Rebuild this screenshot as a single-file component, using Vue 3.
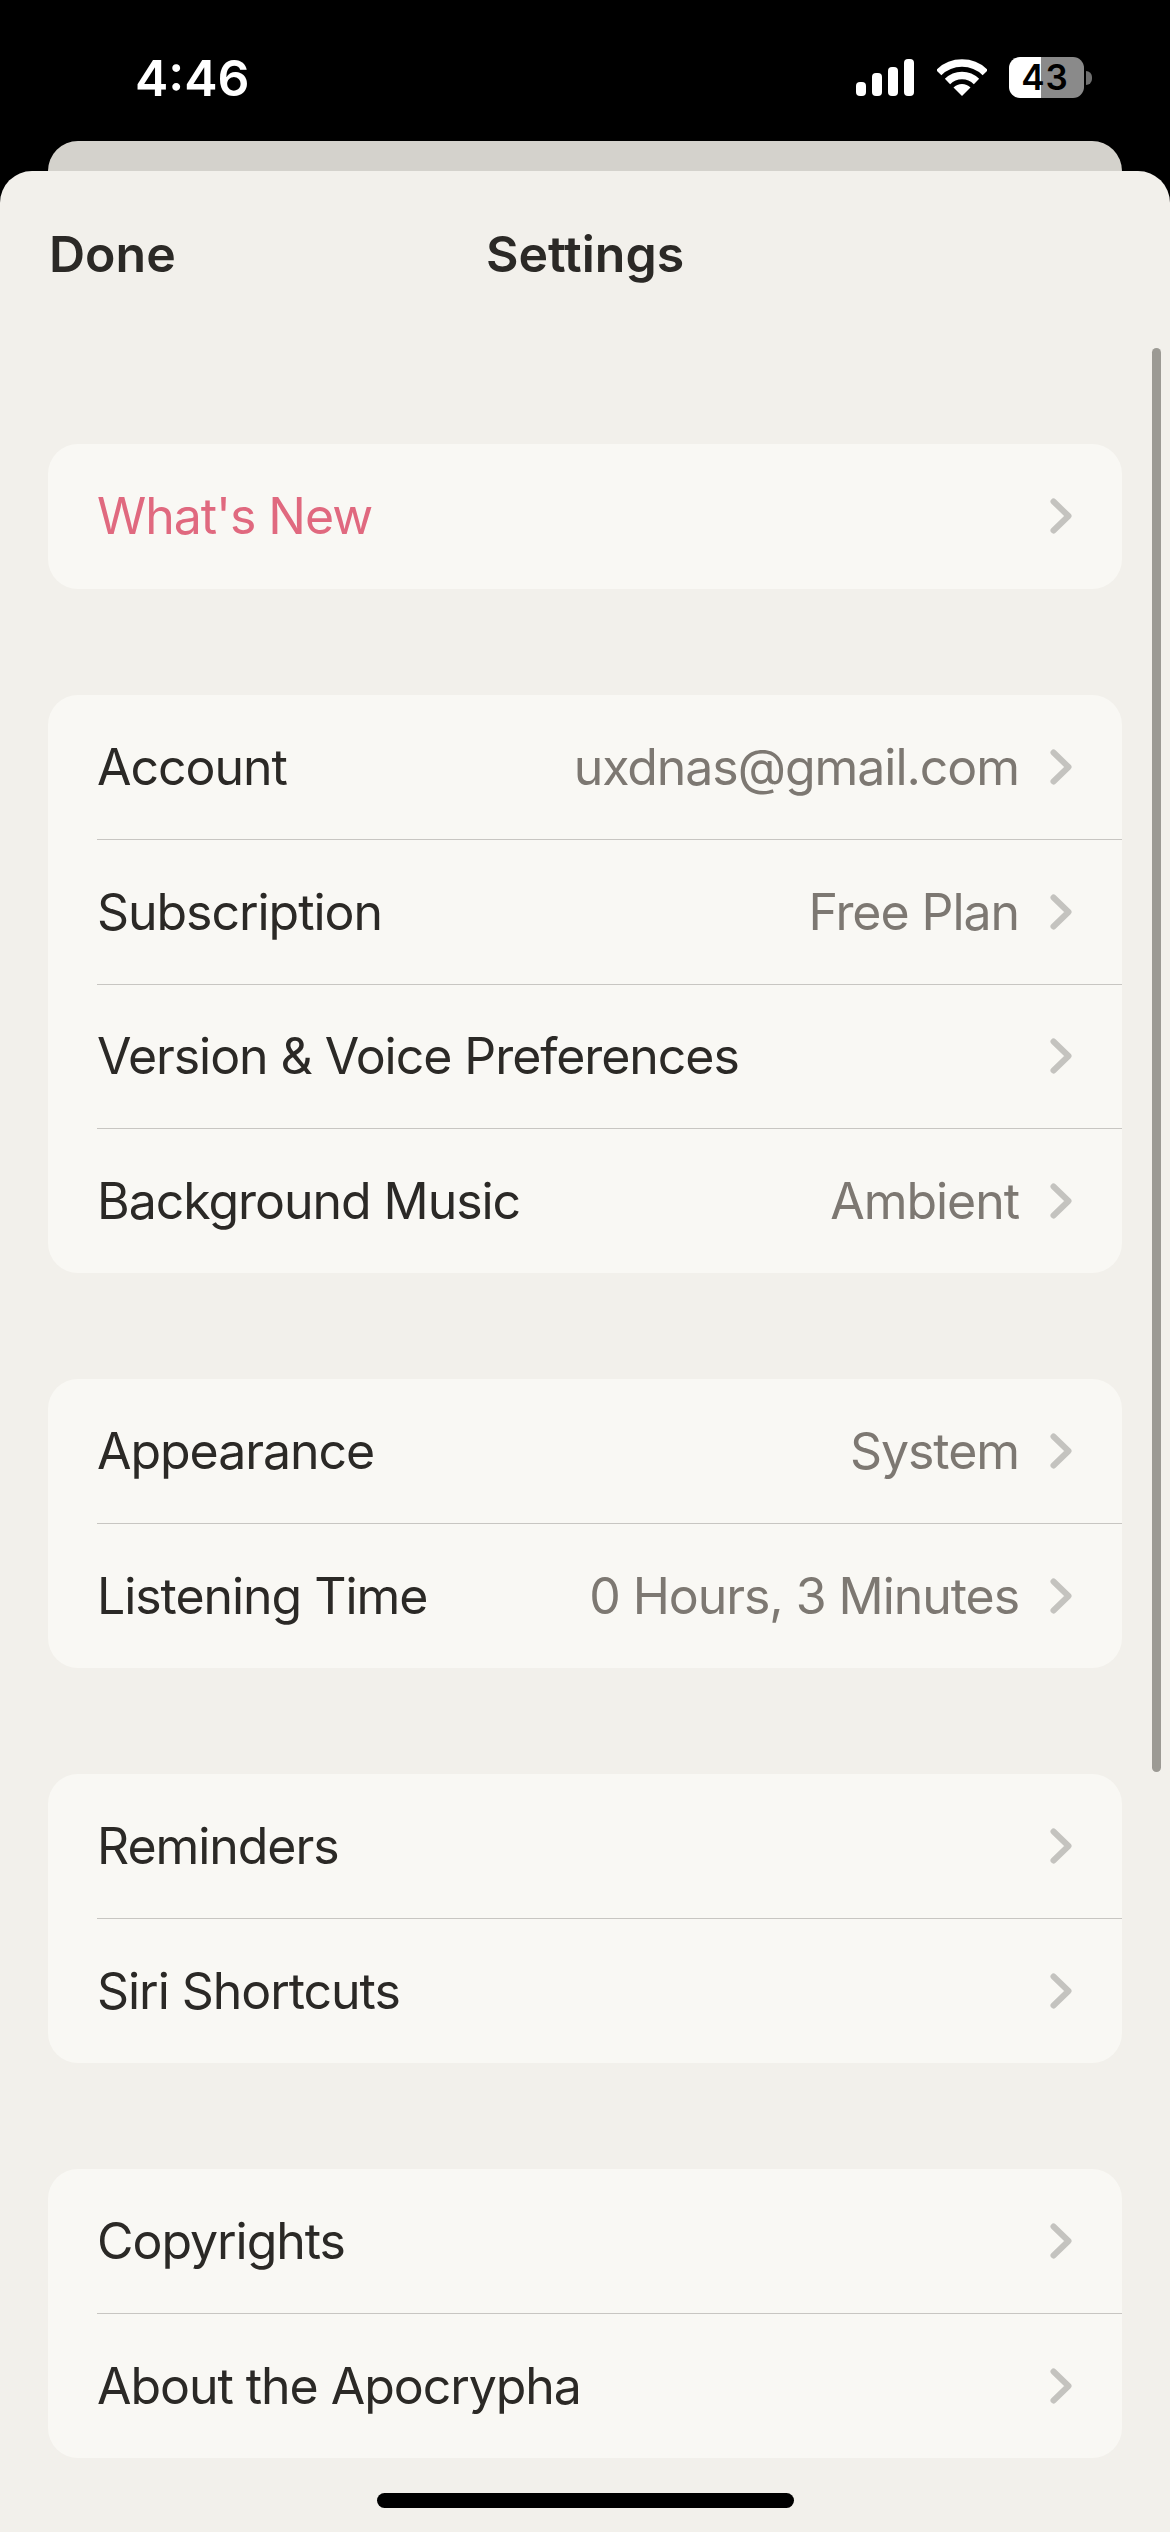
<template>
  <div class="screen">
    <div class="status-bar">
      <span class="time">4:46</span>
      <div class="status-icons">
        <svg class="signal" width="58" height="37" viewBox="0 0 58 37">
          <rect x="0" y="23" width="10" height="14" rx="4" />
          <rect x="16" y="14" width="10" height="23" rx="4" />
          <rect x="32" y="8" width="10" height="29" rx="4" />
          <rect x="48" y="0" width="10" height="37" rx="4" />
        </svg>
        <svg class="wifi" width="50" height="37" viewBox="0 0 50 37">
          <path d="M1.7 13.7a33 33 0 0 1 46.6 0" fill="none" stroke="#fff" stroke-width="7.5" />
          <path d="M10.5 22.5a20.5 20.5 0 0 1 29 0" fill="none" stroke="#fff" stroke-width="7.5" />
          <path d="M25 37l-8.5-8.5a12 12 0 0 1 17 0z" fill="#fff" />
        </svg>
        <div class="battery"><span>43</span></div>
        <div class="battery-nub"></div>
      </div>
    </div>

    <div class="back-card"></div>

    <div class="sheet">
      <header class="sheet-header">
        <span class="done">Done</span>
        <span class="title">Settings</span>
      </header>

      <section v-for="(group, i) in groups" :key="i" class="group">
        <div v-for="row in group" :key="row.label" class="row">
          <span class="label" :class="{ accent: row.accent }">{{ row.label }}</span>
          <span v-if="row.value" class="value">{{ row.value }}</span>
          <svg class="chevron" width="22" height="36" viewBox="0 0 22 36">
            <path d="M3.5 3.5L18.5 18L3.5 32.5" fill="none" stroke="#c4c3bf" stroke-width="6" stroke-linecap="round" stroke-linejoin="round" />
          </svg>
        </div>
      </section>

      <div class="scrollbar"></div>
    </div>

    <div class="home-indicator"></div>
  </div>
</template>

<script setup>
const groups = [
  [{ label: "What's New", accent: true }],
  [
    { label: 'Account', value: 'uxdnas@gmail.com' },
    { label: 'Subscription', value: 'Free Plan' },
    { label: 'Version & Voice Preferences' },
    { label: 'Background Music', value: 'Ambient' }
  ],
  [
    { label: 'Appearance', value: 'System' },
    { label: 'Listening Time', value: '0 Hours, 3 Minutes' }
  ],
  [{ label: 'Reminders' }, { label: 'Siri Shortcuts' }],
  [{ label: 'Copyrights' }, { label: 'About the Apocrypha' }]
]
</script>

<style>
html,
body {
  margin: 0;
  background: #000;
}
</style>

<style scoped>
.screen {
  position: relative;
  width: 1170px;
  height: 2532px;
  overflow: hidden;
  background: #000;
  font-family: Inter, "Liberation Sans", sans-serif;
}

.status-bar {
  height: 141px;
  box-sizing: border-box;
  padding: 50px 78px 0 135px;
  display: flex;
  justify-content: space-between;
  align-items: flex-start;
}
.time {
  color: #fff;
  font-size: 50px;
  font-weight: 600;
  line-height: 56px;
}
.status-icons {
  display: flex;
  align-items: flex-start;
  padding-top: 7px;
}
.signal {
  fill: #fff;
  margin-top: 2px;
  margin-right: 23px;
}
.wifi {
  margin-top: 2px;
  margin-right: 22px;
}
.battery {
  width: 75px;
  height: 41px;
  box-sizing: border-box;
  padding-right: 3px;
  border-radius: 11px;
  background: linear-gradient(to right, #fff 32px, #8a8a8a 32px);
  display: flex;
  align-items: center;
  justify-content: center;
  color: #000;
  font-size: 35px;
  font-weight: 600;
  letter-spacing: 1px;
  line-height: 41px;
}
.battery-nub {
  width: 6px;
  height: 14px;
  margin-left: 2px;
  margin-top: 14px;
  border-radius: 0 7px 7px 0;
  background: #6f6f6f;
}

.back-card {
  height: 30px;
  margin: 0 48px;
  background: #d4d2cc;
  border-radius: 30px 30px 0 0;
}

.sheet {
  position: relative;
  height: 2361px;
  box-sizing: border-box;
  padding: 0 48px;
  background: #f2f0eb;
  border-radius: 32px 32px 0 0;
}
.sheet-header {
  position: relative;
  height: 273px;
  box-sizing: border-box;
  padding-top: 53px;
  text-align: center;
  color: #2b2926;
  font-size: 50px;
  font-weight: 600;
  line-height: 60px;
}
.done {
  position: absolute;
  left: 1px;
}

.group {
  margin-bottom: 106px;
  background: #f9f8f4;
  border-radius: 30px;
  overflow: hidden;
}
.row {
  height: 144.5px;
  box-sizing: border-box;
  margin-left: 49px;
  padding-right: 50px;
  display: flex;
  align-items: center;
  font-size: 50px;
  line-height: 60px;
  letter-spacing: -1.05px;
  color: #2b2926;
}
.row + .row {
  border-top: 1.5px solid #c8c6c2;
}
.label {
  flex: 1;
  white-space: nowrap;
}
.accent {
  color: #e0697f;
}
.value {
  color: #7d7872;
  margin-right: 31px;
  white-space: nowrap;
}
.chevron {
  flex: none;
}

.scrollbar {
  position: absolute;
  top: 177px;
  right: 9px;
  width: 9px;
  height: 1424px;
  border-radius: 5px;
  background: #9c9a94;
}

.home-indicator {
  position: absolute;
  left: 377px;
  top: 2493px;
  width: 417px;
  height: 15px;
  border-radius: 8px;
  background: #000;
}
</style>
